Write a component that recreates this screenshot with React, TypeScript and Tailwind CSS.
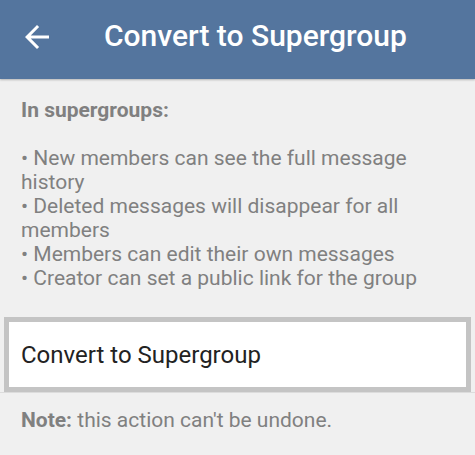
const points = [
  'New members can see the full message history',
  'Deleted messages will disappear for all members',
  'Members can edit their own messages',
  'Creator can set a public link for the group',
]

function BackArrow() {
  return (
    <svg viewBox="0 0 24 24" className="h-9 w-9" fill="currentColor">
      <path d="M20 11H7.83l5.59-5.59L12 4l-8 8 8 8 1.41-1.41L7.83 13H20v-2z" />
    </svg>
  )
}

export default function App() {
  return (
    <div className="min-h-[455px] w-[475px] bg-[#f0f0f0] font-['Roboto',sans-serif]">
      <header className="flex h-[79px] items-start bg-[#54759e] shadow-[0_1px_2px_rgba(0,0,0,0.25)]">
        <button className="ml-[19px] mt-[19px] text-white">
          <BackArrow />
        </button>
        <h1 className="ml-[49px] mt-[21px] text-[30px] leading-[30px] font-medium text-white">
          Convert to Supergroup
        </h1>
      </header>

      <div className="px-[21px] pt-[19px] text-[21px] leading-[24px] text-[#808080]">
        <p className="font-bold">In supergroups:</p>
        <div className="mt-[24px]">
          {points.map((p) => (
            <p key={p}>• {p}</p>
          ))}
        </div>
      </div>

      <div className="mt-[27px] border-b border-[#dcdcdc]">
        <div className="mx-[4px] flex h-[75px] items-center border-[5px] border-[#c4c4c4] bg-white px-[12px]">
          <span className="text-[24px] leading-[24px] text-[#222]">Convert to Supergroup</span>
        </div>
      </div>

      <p className="px-[21px] pt-[15px] text-[21px] leading-[24px] text-[#808080]">
        <span className="font-bold">Note:</span> this action can't be undone.
      </p>
    </div>
  )
}
